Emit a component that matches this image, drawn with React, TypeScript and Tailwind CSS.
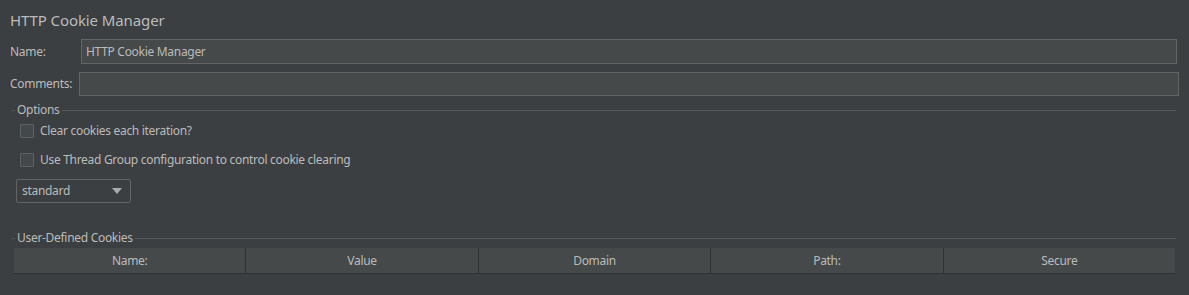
import React from "react";

const font = { fontFamily: '"Noto Sans", "Open Sans", sans-serif', letterSpacing: "-0.3px" };

function Checkbox({ label }: { label: string }) {
  return (
    <div className="flex items-center h-[14px]">
      <div className="ml-[20px] w-[14px] h-[14px] border border-[#5d6163] bg-[#43494a] rounded-[1px]" />
      <span className="ml-[6px] text-[12px] leading-none">{label}</span>
    </div>
  );
}

function Legend({ text }: { text: string }) {
  return (
    <div className="flex items-center h-[14px]">
      <div className="w-[3px] ml-[12px] h-px bg-[#555a5c]" />
      <span className="ml-[2px] mr-[2px] text-[12px] leading-none">{text}</span>
      <div className="flex-1 mr-[13px] h-px bg-[#555a5c]" />
    </div>
  );
}

export default function App() {
  const cols = ["Name:", "Value", "Domain", "Path:", "Secure"];
  return (
    <div
      className="w-[1189px] h-[295px] bg-[#3c3f41] text-[#bbbbbb] overflow-hidden"
      style={font}
    >
      <div className="pt-[10px] pl-[10px] h-[39px] text-[15px] leading-[20px] tracking-[-0.1px]">
        HTTP Cookie Manager
      </div>
      <div className="flex items-center h-[25px]">
        <span className="ml-[10px] w-[71px] text-[12px]">Name:</span>
        <div className="w-[1096px] h-[25px] bg-[#45494a] border border-[#646464] flex items-center pl-[4px] text-[12px]">
          HTTP Cookie Manager
        </div>
      </div>
      <div className="flex items-center h-[24px] mt-[8px]">
        <span className="ml-[10px] w-[69px] text-[12px]">Comments:</span>
        <div className="w-[1100px] h-[24px] bg-[#45494a] border border-[#646464]" />
      </div>
      <div className="mt-[7px]">
        <Legend text="Options" />
      </div>
      <div className="mt-[7px]">
        <Checkbox label="Clear cookies each iteration?" />
      </div>
      <div className="mt-[15px]">
        <Checkbox label="Use Thread Group configuration to control cookie clearing" />
      </div>
      <div className="mt-[12px] ml-[16px] w-[115px] h-[24px] border border-[#646464] rounded-[2px] flex items-center justify-between pl-[5px] pr-[8px] text-[12px] bg-[#3c3f41]">
        <span>standard</span>
        <svg width="10" height="6" viewBox="0 0 10 6">
          <polygon points="0,0 10,0 5,6" fill="#a9acae" />
        </svg>
      </div>
      <div className="mt-[28px]">
        <Legend text="User-Defined Cookies" />
      </div>
      <div className="mt-[3px] ml-[14px] w-[1161px] h-[26px] bg-[#45494a] border-b border-[#2f3233] flex">
        {cols.map((c, i) => (
          <div
            key={c}
            className={
              "flex-1 flex items-center justify-center text-[12px] " +
              (i < 4 ? "border-r border-[#2f3233]" : "")
            }
          >
            {c}
          </div>
        ))}
      </div>
    </div>
  );
}
